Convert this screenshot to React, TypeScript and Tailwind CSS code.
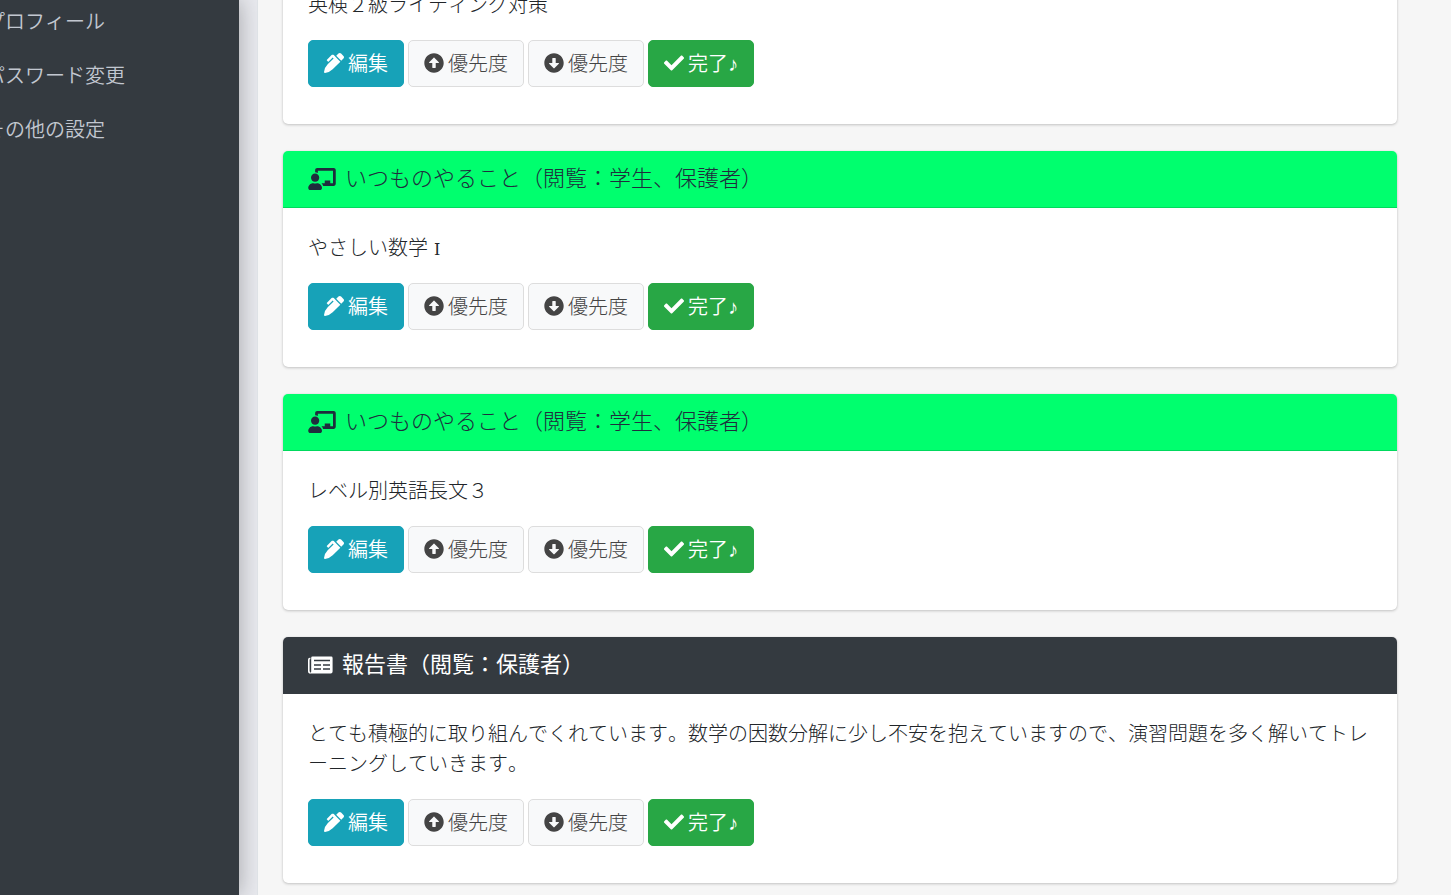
import React from 'react';
import {
  FaArrowAltCircleDown,
  FaArrowAltCircleUp,
  FaChalkboardTeacher,
  FaCheck,
  FaPenAlt,
} from 'react-icons/fa';

type Task = {
  id: number;
  kind: 'routine' | 'report';
  title: string;
  body: React.ReactNode;
};

const menu = ['プロフィール', 'パスワード変更', 'その他の設定'];

const tasks: Task[] = [
  { id: 1, kind: 'routine', title: 'いつものやること（閲覧：学生、保護者）', body: '英検２級ライティング対策' },
  {
    id: 2,
    kind: 'routine',
    title: 'いつものやること（閲覧：学生、保護者）',
    body: (
      <>
        やさしい数学<span className="px-1.5 font-['DejaVu_Serif',serif] text-base leading-none">Ⅰ</span>
      </>
    ),
  },
  { id: 3, kind: 'routine', title: 'いつものやること（閲覧：学生、保護者）', body: 'レベル別英語長文３' },
  {
    id: 4,
    kind: 'report',
    title: '報告書（閲覧：保護者）',
    body: 'とても積極的に取り組んでくれています。数学の因数分解に少し不安を抱えていますので、演習問題を多く解いてトレーニングしていきます。',
  },
];

const NewspaperIcon = () => (
  <svg viewBox="0 0 25 18" className="h-[18px] w-[25px]" fill="none" aria-hidden="true">
    <path d="M2.4 2.5H1.8Q.8 2.5.8 3.7V15Q.8 16.900 2.500 16.900" stroke="currentColor" strokeWidth="1.6" />
    <path d="M4.5.5h18.7q1.4 0 1.4 1.4v13.7q0 1.9-1.9 1.9H2.2q1-.8 1-2V1.8Q3.2.5 4.5.5Z" fill="currentColor" />
    <path d="M6 4.5h16M6 9h7m2 0h7M6 13h7m2 0h7" stroke="#343a40" strokeWidth="1.4" />
  </svg>
);

const Sidebar = () => (
  <aside className="z-10 w-[239px] shrink-0 bg-[#343a40] pt-1.5 font-[350] shadow-[0_0_22px_rgba(0,0,0,0.3)]">
    <nav className="-ml-[15px] flex flex-col gap-6">
      {menu.map((label) => (
        <a key={label} href="#" className="text-xl leading-[30px] whitespace-nowrap text-[#c2c7d0]">
          {label}
        </a>
      ))}
    </nav>
  </aside>
);

const buttonBase = 'flex h-[47px] items-center gap-1 rounded-[5px] border px-[15px] pb-0.5 text-xl leading-[30px]';

const TaskButtons = () => (
  <div className="mt-[21px] mb-3 flex flex-wrap gap-1">
    <button type="button" className={`${buttonBase} border-[#17a2b8] bg-[#17a2b8] font-[350] text-white`}>
      <FaPenAlt />
      編集
    </button>
    <button type="button" className={`${buttonBase} border-[#dddddd] bg-[#f8f9fa] text-[#444444]`}>
      <FaArrowAltCircleUp />
      優先度
    </button>
    <button type="button" className={`${buttonBase} border-[#dddddd] bg-[#f8f9fa] text-[#444444]`}>
      <FaArrowAltCircleDown />
      優先度
    </button>
    <button type="button" className={`${buttonBase} border-[#28a745] bg-[#28a745] font-[350] text-white`}>
      <FaCheck />
      <span>
        完了<span className="font-['Liberation_Sans',sans-serif] leading-none font-bold">♪</span>
      </span>
    </button>
  </div>
);

const TaskCard = ({ task }: { task: Task }) => {
  const isReport = task.kind === 'report';

  return (
    <article className="rounded-[5px] bg-white shadow-[0_0_1px_rgba(0,0,0,0.13),0_1px_3px_rgba(0,0,0,0.2)]">
      <header
        className={`flex h-[57px] items-center gap-[9px] rounded-t-[5px] border-b px-[25px] text-[22px] leading-[33px] ${
          isReport
            ? 'border-[#343a40] bg-[#343a40] font-normal text-white'
            : 'border-black/15 bg-[#00ff6e] text-[#1f2d3d]'
        }`}
      >
        {isReport ? <NewspaperIcon /> : <FaChalkboardTeacher className="h-[22px] w-7" />}
        <h3 className="pb-1.5 font-[inherit]">{task.title}</h3>
      </header>
      <div className="px-[25px] pt-6 pb-[25px]">
        <p className="text-xl leading-[30px]">{task.body}</p>
        <TaskButtons />
      </div>
    </article>
  );
};

export default function App() {
  return (
    <div
      lang="ja"
      className="flex h-screen overflow-hidden bg-[#e8e9ee] font-['Noto_Sans_CJK_JP',sans-serif] font-light text-[#212529] [font-kerning:none]"
    >
      <Sidebar />
      <main className="z-20 ml-[18px] flex min-w-0 flex-1 flex-col justify-end border-l border-[#dee2e6] bg-[#f6f6f6] pr-[54px] pb-3 pl-[25px]">
        <div className="flex flex-col gap-[27px]">
          {tasks.map((task) => (
            <TaskCard key={task.id} task={task} />
          ))}
        </div>
      </main>
    </div>
  );
}
